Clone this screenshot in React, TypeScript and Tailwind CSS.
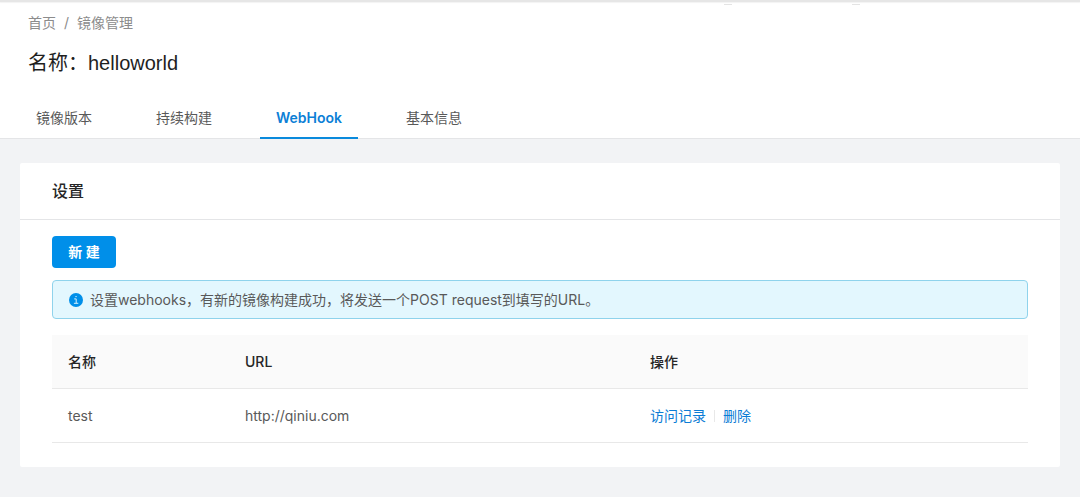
const tabs = ["镜像版本", "持续构建", "WebHook", "基本信息"];

const hooks = [{ name: "test", url: "http://qiniu.com" }];

function InfoIcon() {
  return (
    <svg viewBox="0 0 14 14" className="size-3.5 shrink-0" aria-hidden="true">
      <circle cx="7" cy="7" r="7" fill="#008fe9" />
      <path
        d="M5.2 5.9H7.2V10.2M4.9 10.3H9.3M6.4 3.6H7.7"
        fill="none"
        stroke="#d5f1fc"
        strokeWidth="1"
      />
    </svg>
  );
}

function PageHeader() {
  return (
    <header className="relative border-b border-[#e4e5e7] bg-white">
      <div className="h-0.5 bg-[#e6e6e6] shadow-[0_1px_1px_#f3f3f3]" />
      <span className="absolute top-1 right-[348px] h-px w-2 bg-[#e4e4e4]" />
      <span className="absolute top-1 right-[220px] h-px w-2 bg-[#e4e4e4]" />
      <nav aria-label="breadcrumb" className="flex gap-2 px-7 pt-2.5 text-sm leading-[22px] text-[#8c8c8c]">
        <a href="#home">首页</a>
        <span>/</span>
        <a href="#images">镜像管理</a>
      </nav>
      <h1 className="px-7 pt-3 font-['Liberation_Sans','Noto_Sans_CJK_SC',sans-serif] text-xl leading-[34px] text-[#1f1f1f]">
        名称：helloworld
      </h1>
      <nav className="-mb-px flex gap-8 px-5 pt-[18px]">
        {tabs.map((tab) => (
          <a
            key={tab}
            href="#tab"
            className={
              tab === "WebHook"
                ? "border-b-2 border-[#0a8adc] px-4 py-2 text-sm leading-[23px] font-semibold text-[#0c80d6]"
                : "border-b-2 border-transparent px-4 py-2 text-sm leading-[23px] text-[#595959]"
            }
          >
            {tab}
          </a>
        ))}
      </nav>
    </header>
  );
}

function HookTable() {
  return (
    <table className="mt-4 w-full table-fixed border-collapse text-left text-sm leading-[21px]">
      <thead className="bg-[#fafafa] text-[#262626]">
        <tr className="border-b border-[#e8e8e8]">
          <th className="w-[177px] px-4 py-4 font-medium">名称</th>
          <th className="w-[405px] px-4 py-4 font-medium">URL</th>
          <th className="px-4 py-4 font-medium">操作</th>
        </tr>
      </thead>
      <tbody className="text-[#595959]">
        {hooks.map((hook) => (
          <tr key={hook.name} className="border-b border-[#e8e8e8]">
            <td className="px-4 py-4">{hook.name}</td>
            <td className="px-4 py-4">{hook.url}</td>
            <td className="px-4 py-4">
              <div className="flex items-center gap-2 text-[#0c7cd5]">
                <a href="#log">访问记录</a>
                <span className="h-3 w-px bg-[#e8e8e8]" />
                <a href="#delete">删除</a>
              </div>
            </td>
          </tr>
        ))}
      </tbody>
    </table>
  );
}

export default function App() {
  return (
    <div className="min-h-screen bg-[#f2f3f5] font-['Inter','Noto_Sans_CJK_SC',sans-serif]">
      <PageHeader />
      <main className="px-5 py-6">
        <section className="rounded-xs bg-white">
          <h2 className="border-b border-[#e4e5e7] px-8 py-4 text-base leading-6 font-medium text-[#262626]">
            设置
          </h2>
          <div className="px-8 pt-4 pb-6">
            <button
              type="button"
              className="block h-8 min-w-16 rounded bg-[#008fe9] px-3 text-sm font-bold text-white"
            >
              新 建
            </button>
            <div
              role="alert"
              className="mt-3 flex items-center gap-[7px] rounded border border-[#8fd3ec] bg-[#e3f7fe] px-4 py-2 text-sm leading-[21px] text-[#595959]"
            >
              <InfoIcon />
              <p>设置webhooks，有新的镜像构建成功，将发送一个POST request到填写的URL。</p>
            </div>
            <HookTable />
          </div>
        </section>
      </main>
    </div>
  );
}
